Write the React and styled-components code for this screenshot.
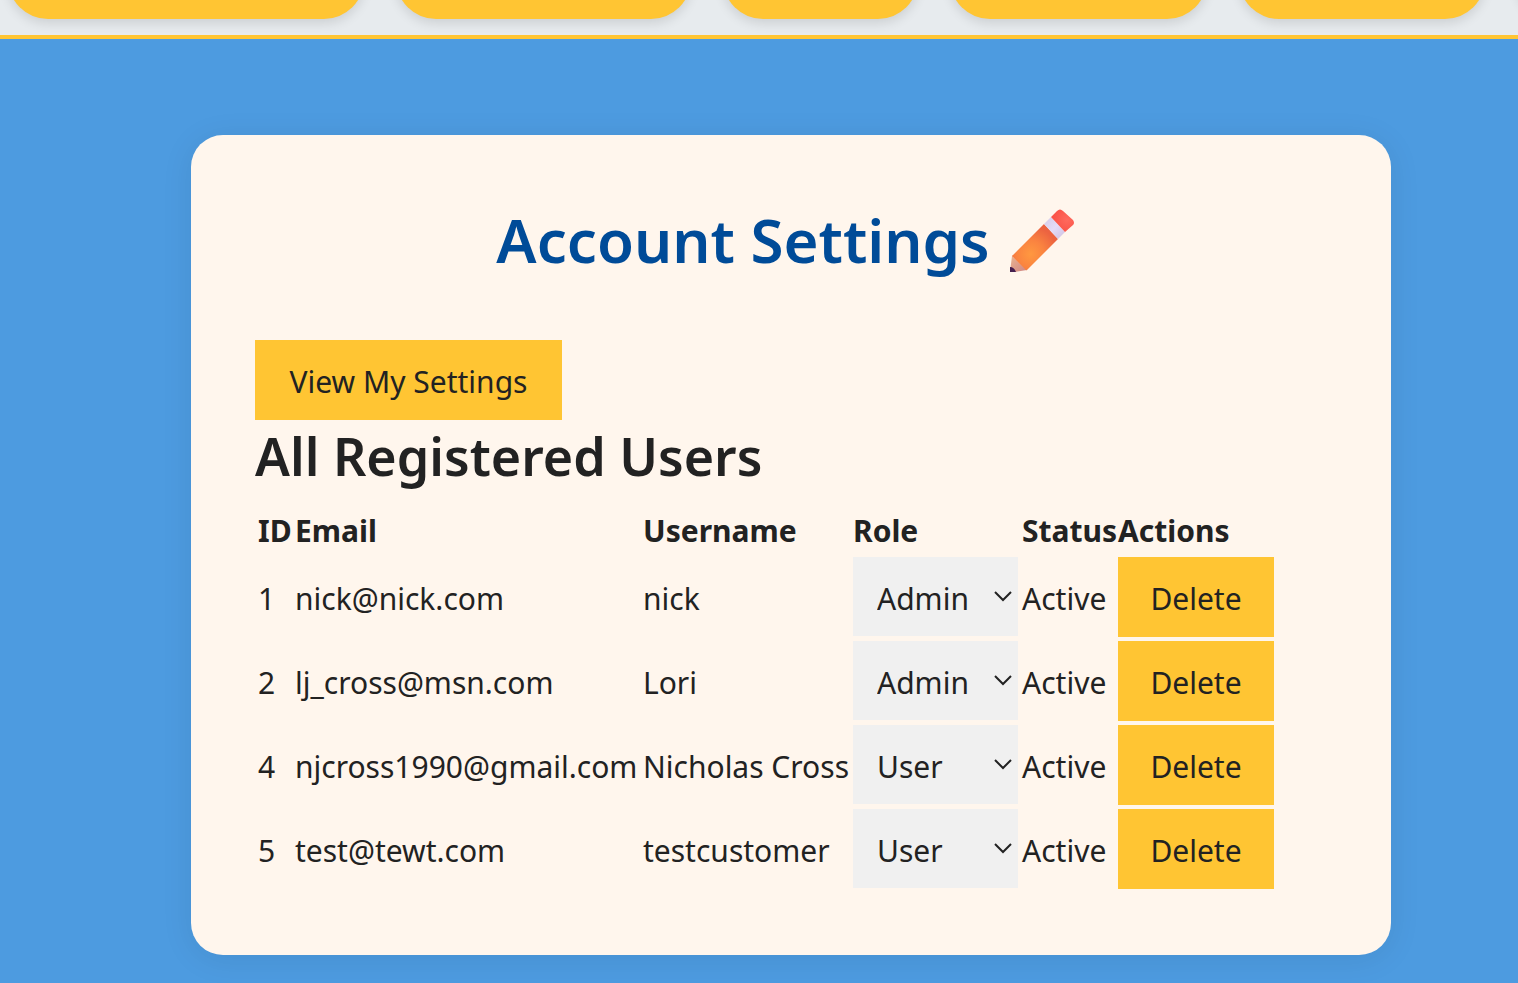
import React, { useState } from "react";
import styled, { createGlobalStyle } from "styled-components";

const navWidths = [356, 295, 195, 257, 246, 240];

const registeredUsers = [
  { id: 1, email: "nick@nick.com", username: "nick", role: "Admin", status: "Active" },
  { id: 2, email: "lj_cross@msn.com", username: "Lori", role: "Admin", status: "Active" },
  { id: 4, email: "njcross1990@gmail.com", username: "Nicholas Cross", role: "User", status: "Active" },
  { id: 5, email: "test@tewt.com", username: "testcustomer", role: "User", status: "Active" },
];

function PencilIcon() {
  return (
    <PencilSvg viewBox="0 0 88 64" aria-hidden="true">
      <defs>
        <radialGradient id="pencilBody" cx="0.4" cy="0.65" r="0.6">
          <stop offset="0" stopColor="#ff9840" />
          <stop offset="0.5" stopColor="#fa8340" />
          <stop offset="1" stopColor="#ec6340" />
        </radialGradient>
        <linearGradient id="pencilBand" x1="0" y1="0" x2="1" y2="1">
          <stop offset="0" stopColor="#d3cbe6" />
          <stop offset="0.5" stopColor="#e5dcf8" />
          <stop offset="1" stopColor="#cdbfe0" />
        </linearGradient>
        <linearGradient id="pencilTip" x1="0" y1="0" x2="1" y2="1">
          <stop offset="0" stopColor="#eab490" />
          <stop offset="1" stopColor="#cf8583" />
        </linearGradient>
        <radialGradient id="pencilEraser" cx="0.7" cy="0.45" r="0.6">
          <stop offset="0" stopColor="#ff6a5e" />
          <stop offset="1" stopColor="#fa5348" />
        </radialGradient>
      </defs>
      <path d="M14 47 L29 61 L17 63 L12 63 Z" fill="url(#pencilTip)" />
      <path d="M12 58 Q16 58 18 63 L12 63 Z" fill="#45204f" />
      <path d="M46 15 L60 30 L29 61 Q28 62 27 60 L15 48 Q13 47 15 46 Z" fill="url(#pencilBody)" />
      <path d="M53 8 L67 23 L60 30 L46 15 Z" fill="url(#pencilBand)" />
      <path d="M53 8 L59 2 Q62 -1 65 2 L75 11 Q77 14 75 16 L67 23 Z" fill="url(#pencilEraser)" />
    </PencilSvg>
  );
}

function RoleSelect({ user, onChange }) {
  return (
    <SelectWrap>
      <Select
        aria-label="Role"
        value={user.role}
        onChange={(e) => onChange(user.id, e.target.value)}
      >
        <option>Admin</option>
        <option>User</option>
      </Select>
      <Chevron viewBox="0 0 18 12" aria-hidden="true">
        <path d="M1 2 L9 10 L17 2" />
      </Chevron>
    </SelectWrap>
  );
}

function App() {
  const [users, setUsers] = useState(registeredUsers);

  const changeRole = (id, role) => {
    setUsers(users.map((user) => (user.id === id ? { ...user, role } : user)));
  };

  const deleteUser = (id) => {
    setUsers(users.filter((user) => user.id !== id));
  };

  return (
    <>
      <GlobalStyle />
      <Header>
        {navWidths.map((width) => (
          <NavPill key={width} $width={width} />
        ))}
      </Header>
      <Main>
        <Card>
          <Title>
            Account Settings
            <PencilIcon />
          </Title>
          <Button type="button" $minWidth={307}>
            View My Settings
          </Button>
          <Subtitle>All Registered Users</Subtitle>
          <Table>
            <colgroup>
              <Col $width={35} />
              <Col $width={346} />
              <Col $width={208} />
              <Col $width={167} />
              <Col $width={94} />
              <Col $width={158} />
            </colgroup>
            <thead>
              <tr>
                <Th>ID</Th>
                <Th>Email</Th>
                <Th>Username</Th>
                <Th>Role</Th>
                <Th>Status</Th>
                <Th>Actions</Th>
              </tr>
            </thead>
            <tbody>
              {users.map((user) => (
                <tr key={user.id}>
                  <Td>{user.id}</Td>
                  <Td>{user.email}</Td>
                  <Td>{user.username}</Td>
                  <ControlTd>
                    <RoleSelect user={user} onChange={changeRole} />
                  </ControlTd>
                  <Td>{user.status}</Td>
                  <ControlTd>
                    <Button type="button" $minWidth={156} onClick={() => deleteUser(user.id)}>
                      Delete
                    </Button>
                  </ControlTd>
                </tr>
              ))}
            </tbody>
          </Table>
        </Card>
      </Main>
    </>
  );
}

const GlobalStyle = createGlobalStyle`
  * {
    box-sizing: border-box;
  }
  body {
    margin: 0;
    min-height: 100vh;
    background-color: #4d9be0;
    color: #222222;
    font-family: "Segoe UI", "Noto Sans", sans-serif;
    font-size: 30px;
    line-height: 48px;
  }
`;
const Header = styled.header`
  display: flex;
  align-items: flex-end;
  gap: 32px;
  height: 39px;
  padding: 0 8px 16px;
  overflow: hidden;
  background-color: #e7ebee;
  border-bottom: 4px solid #ffc533;
`;
const NavPill = styled.div`
  flex: none;
  width: ${(props) => props.$width}px;
  height: 80px;
  border-radius: 40px;
  background-color: #ffc533;
  box-shadow: 0 4px 12px rgba(0, 0, 0, 0.12);
`;
const Main = styled.main`
  padding: 96px 0 28px 64px;
`;
const Card = styled.section`
  max-width: 1200px;
  margin: 0 auto;
  padding: 64px 64px 63px;
  border-radius: 32px;
  background-color: #fff6ed;
  box-shadow: 0 4px 32px rgba(0, 0, 0, 0.08);
`;
const Title = styled.h1`
  display: flex;
  justify-content: center;
  align-items: center;
  gap: 8px;
  margin: 0 0 58px;
  color: #004b98;
  font-size: 60px;
  font-weight: 600;
  line-height: 83px;
`;
const PencilSvg = styled.svg`
  flex: none;
  width: 88px;
  height: 64px;
`;
const Subtitle = styled.h2`
  margin: 0 0 10px;
  font-size: 52px;
  font-weight: 600;
  line-height: 72px;
`;
const Button = styled.button`
  display: block;
  min-width: ${(props) => props.$minWidth}px;
  height: 80px;
  padding: 4px 32px 0;
  border: none;
  background-color: #ffc533;
  color: inherit;
  font: inherit;
  white-space: nowrap;
  cursor: pointer;
`;
const Table = styled.table`
  width: 1022px;
  table-layout: fixed;
  border-spacing: 2px;
  white-space: nowrap;
`;
const Col = styled.col`
  width: ${(props) => props.$width}px;
`;
const Th = styled.th`
  height: 50px;
  padding: 4px 1px 0;
  line-height: 46px;
  text-align: left;
  font-weight: 700;
`;
const Td = styled.td`
  padding: 4px 1px 0;
`;
const ControlTd = styled.td`
  padding: 1px;
  vertical-align: top;
`;
const SelectWrap = styled.div`
  position: relative;
`;
const Select = styled.select`
  appearance: none;
  display: block;
  width: 100%;
  height: 79px;
  padding: 4px 24px 0;
  border: none;
  border-radius: 0;
  background-color: #f0f0f0;
  color: inherit;
  font: inherit;
`;
const Chevron = styled.svg`
  position: absolute;
  top: 33px;
  right: 6px;
  width: 18px;
  height: 12px;
  fill: none;
  stroke: #222222;
  stroke-width: 2;
  pointer-events: none;
`;

export default App;
